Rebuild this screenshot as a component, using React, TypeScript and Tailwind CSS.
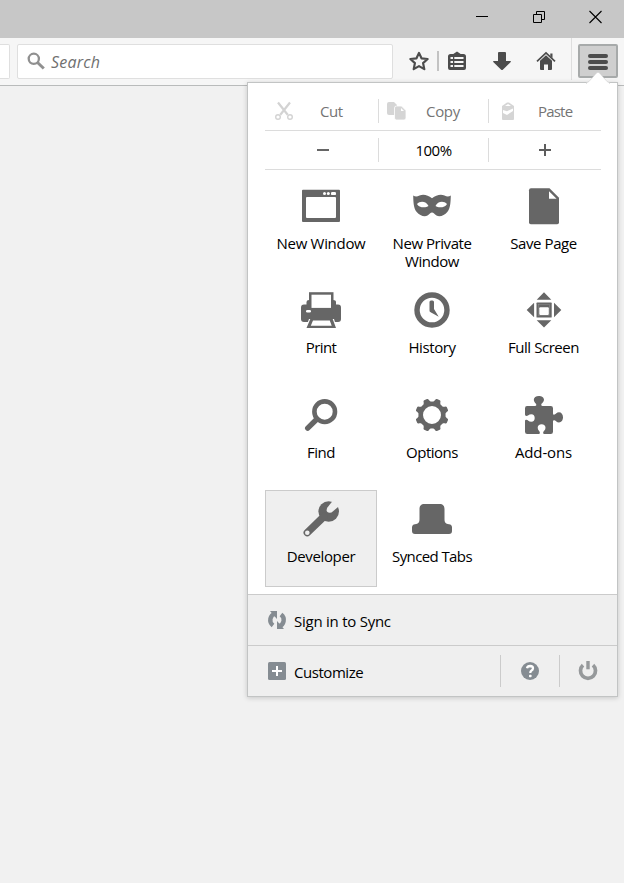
import type { ReactNode } from "react";

const label = "font-['Open_Sans','Noto_Sans',sans-serif]";

function Icon({ children }: { children: ReactNode }) {
  return (
    <svg width="40" height="40" viewBox="0 0 40 40" fill="#666" className="block shrink-0">
      {children}
    </svg>
  );
}

function SmallIcon({ children, className = "" }: { children: ReactNode; className?: string }) {
  return (
    <svg width="20" height="20" viewBox="0 0 20 20" className={`block shrink-0 ${className}`}>
      {children}
    </svg>
  );
}

const windowIcon = (
  <Icon>
    <path fillRule="evenodd" d="M2 3.7H38Q39 3.7 39 4.700V35Q39 36 38 36H2Q1 36 1 35V4.700Q1 3.700 2 3.700ZM6 11Q5 11 5 12V31Q5 32 6 32H34Q35 32 35 31V12Q35 11 34 11Z" />
    <circle cx="23.5" cy="7.600" r="1.500" fill="#fff" />
    <circle cx="27.300" cy="7.600" r="1.500" fill="#fff" />
    <rect x="30" y="6.100" width="5" height="3" rx="1.200" fill="#fff" />
  </Icon>
);

const maskIcon = (
  <Icon>
    <path
      fillRule="evenodd"
      d="M1.200 9.500C3.500 11 5.500 10.500 7.500 9.500C12 7.700 16 9.500 20 12.200C24 9.500 28 7.700 32.500 9.500C34.500 10.500 36.500 11 38.800 9.500C38.600 16 38.500 22 35.300 26C32.500 29.500 27.500 31.500 24.500 29.500C22.500 28 21.500 26.500 20 26.500C18.500 26.500 17.500 28 15.500 29.500C12.500 31.500 7.500 29.500 4.700 26C1.500 22 1.400 16 1.200 9.500ZM5 18C6.500 21.600 13.500 22.400 16.500 20C14.500 15.500 8.500 14.300 5 18ZM35 18C33.500 21.600 26.500 22.400 23.500 20C25.500 15.500 31.500 14.300 35 18Z"
    />
  </Icon>
);

const pageIcon = (
  <Icon>
    <path d="M7 2.300H25.500L35 11.700V36.500Q35 38.300 33.200 38.300H6.800Q5 38.300 5 36.500V4.300Q5 2.300 7 2.300Z" />
    <path d="M25 5.200V12.700H32.600Z" fill="#fff" />
  </Icon>
);

const printIcon = (
  <Icon>
    <path d="M3 14.500H37Q40 14.500 40 17.500V29Q40 32 37 32H3Q0 32 0 29V17.500Q0 14.500 3 14.500Z" />
    <path d="M5.500 17V12Q5.500 10 8 10H32Q35 10 35 12V17Z" />
    <path d="M8 2.200H32.500V18H8Z" />
    <rect x="10.500" y="4.700" width="19.500" height="13.200" fill="#fff" />
    <rect x="5" y="20" width="5" height="2.600" rx="1.300" fill="#fff" />
    <path d="M8 29H33L36 38.500H4.500Z" fill="#fff" />
    <path fillRule="evenodd" d="M9.500 28.500H31.500L35 38H5.500ZM12 30.500L9.800 35.700H30.700L28.800 30.500Z" />
  </Icon>
);

const clockIcon = (
  <Icon>
    <circle cx="20" cy="20" r="15" fill="none" stroke="#666" strokeWidth="5.400" />
    <path d="M17.500 12Q17.500 10.500 19 10.500H20.500Q22 10.500 22 12V19L26.700 26.700L18.200 22Q17.500 21.500 17.500 20.500Z" />
  </Icon>
);

const fullScreenIcon = (
  <Icon>
    <path d="M20 2.300L27.300 9.700H12.700ZM20 37.600L12.700 30.200H27.300ZM2.700 20L10.100 12.800V27.200ZM37.300 20L30 12.800V27.200Z" />
    <rect x="12.500" y="12.600" width="15.200" height="15" rx=".6" />
    <rect x="14.500" y="14.600" width="11.200" height="11" fill="none" stroke="#999" strokeWidth=".4" />
    <rect x="15.300" y="17.300" width="9.500" height="7.700" rx="1" fill="#fff" />
  </Icon>
);

const findIcon = (
  <Icon>
    <circle cx="23.700" cy="16.700" r="10.300" fill="none" stroke="#666" strokeWidth="4.600" />
    <path d="M15.500 24.500L6.700 33.100" stroke="#666" strokeWidth="5.400" strokeLinecap="round" />
  </Icon>
);

const toothAngles = [22.5, 67.5, 112.5, 157.5, 202.5, 247.5, 292.5, 337.5];
const gearIcon = (
  <Icon>
    {toothAngles.map((a) => (
      <path key={a} transform={`rotate(${a} 20 20)`} d="M15.500 9L17.200 5Q17.200 3.300 18.500 3.300H21.500Q22.800 3.300 22.800 5L24.500 9Z" />
    ))}
    <circle cx="20" cy="20" r="11.300" fill="none" stroke="#666" strokeWidth="4.600" />
  </Icon>
);

const puzzleIcon = (
  <Icon>
    <path d="M3 11H11.200Q12.700 11 12.200 9C11.300 7.700 9.800 6.800 9.800 4.700C9.800 2.500 12 1 14.800 1C17.600 1 20 2.500 20 4.700C20 6.800 18.200 7.700 17.300 9Q16.900 11 18.400 11H26.800Q29 11 29 13.300V18.400Q29 19.900 30.500 19.600C32 19.200 32.500 17.300 35 17.300C37.300 17.300 39 19.400 39 22.300C39 25.200 37.300 27.400 35 27.400C32.500 27.400 32 25.500 30.500 25.200Q29 24.900 29 26.300V36.700Q29 39 26.800 39H20.500Q19 39 19.100 37.700C19.300 35.900 21.500 35.500 21.500 32.800C21.500 30.700 20 29.300 17.600 29.300C15.200 29.300 13.700 30.700 13.700 32.800C13.700 35.500 15.800 35.900 15.900 37.700Q16 39 14.600 39H3.200Q1 39 1 36.700V26Q1 24.600 2.300 24.700C4 24.800 4.500 26.700 7.300 26.700C9.600 26.700 10.700 25 10.700 22.900C10.700 20.800 9.600 19.200 7.300 19.200C4.500 19.200 4 21.100 2.300 21.100Q1 21 1 19.600V13.200Q1 11 3 11Z" />
  </Icon>
);

const wrenchIcon = (
  <Icon>
    <circle cx="27.700" cy="12.500" r="10.300" />
    <path d="M23 17.500L6.300 33.700" stroke="#666" strokeWidth="7.400" strokeLinecap="round" />
    <path d="M34 -1L26.200 8.700Q24 14.500 30.500 13.500L40 5.500Z" fill="#efefef" />
    <circle cx="6.300" cy="33.700" r="2.300" fill="#efefef" />
  </Icon>
);

const hatIcon = (
  <Icon>
    <path d="M12.500 5H27.500C31 5 32.500 7 32.500 10V20C32.500 23.500 33.500 24.700 37 25.300C39 25.600 40 26.600 40 28.500V32Q40 35 37 35H3Q0 35 0 32V28.500C0 26.600 1 25.600 3 25.300C6.500 24.700 7.500 23.500 7.500 20V10C7.500 7 9 5 12.500 5Z" />
  </Icon>
);

const items: { lines: string[]; icon: ReactNode; track: string; active?: boolean }[] = [
  { lines: ["New Window"], icon: windowIcon, track: "tracking-[-0.3px]" },
  { lines: ["New Private", "Window"], icon: maskIcon, track: "tracking-[-0.45px]" },
  { lines: ["Save Page"], icon: pageIcon, track: "tracking-[-0.4px]" },
  { lines: ["Print"], icon: printIcon, track: "tracking-[-0.6px]" },
  { lines: ["History"], icon: clockIcon, track: "tracking-[-0.4px]" },
  { lines: ["Full Screen"], icon: fullScreenIcon, track: "tracking-[-0.45px]" },
  { lines: ["Find"], icon: findIcon, track: "tracking-[-0.5px]" },
  { lines: ["Options"], icon: gearIcon, track: "tracking-[-0.5px]" },
  { lines: ["Add-ons"], icon: puzzleIcon, track: "tracking-[-0.15px]" },
  { lines: ["Developer"], icon: wrenchIcon, track: "tracking-[-0.35px]", active: true },
  { lines: ["Synced Tabs"], icon: hatIcon, track: "tracking-[-0.6px]" },
];

function TitleBar() {
  return (
    <div className="flex h-[38px] items-start justify-end bg-[#c7c7c7] pr-[18px] pt-[7px]">
      <svg width="132" height="20" viewBox="0 0 132 20" fill="none" stroke="#000" className="block">
        <path d="M2 9.500H14" />
        <path d="M59.500 7.500H67.500V15.500H59.500ZM62.500 7.500V4.500H70.500V12.500H67.500" />
        <path d="M115.500 4L127.500 16M127.500 4L115.500 16" strokeWidth="1.100" />
      </svg>
    </div>
  );
}

function ToolBar() {
  return (
    <div className="flex h-12 border-b border-[#b9bbbb] bg-[#f6f6f6]">
      <div className="mt-1.5 h-[35px] w-2.5 rounded-r-[2px] border border-l-0 border-[#dfdfdf] bg-white" />
      <div className="ml-[7px] mt-1.5 flex h-[35px] w-[376px] items-center rounded-[2px] border border-[#dfdfdf] bg-white pl-[9px]">
        <SmallIcon>
          <circle cx="6.800" cy="6.800" r="5.100" fill="none" stroke="#909090" strokeWidth="2.300" />
          <path d="M10.500 10.500L16.800 16.500" stroke="#909090" strokeWidth="3" />
        </SmallIcon>
        <span className={`${label} ml-[4px] text-[16px] italic leading-5 tracking-[0.2px] text-[#707070]`}>Search</span>
      </div>
      <div className="flex w-[178px] items-start pl-[16px] pt-[13px]">
        <SmallIcon>
          <path d="M10 1.900L12.500 7.300L18.600 8L14.100 12.100L15.300 18.100L10 15.100L4.700 18.100L5.900 12.100L1.400 8L7.500 7.300Z" fill="none" stroke="#4c4c4c" strokeWidth="2.200" strokeLinejoin="round" />
        </SmallIcon>
        <div className="ml-2 h-5 w-[2px] bg-[#c3c3c3]" />
        <SmallIcon className="ml-[8px]">
          <path d="M3.500 3H6.300L10 .4L13.700 3H16.500Q19 3 19 5.500V17Q19 19 17 19H3Q1 19 1 17V5.500Q1 3 3.500 3Z" fill="#4c4c4c" />
          <path d="M3.500 6H6V8H3.500ZM7.300 6H16.500V8H7.300ZM3.500 10H6V12H3.500ZM7.300 10H16.500V12H7.300ZM3.500 14H6V16H3.500ZM7.300 14H16.500V16H7.300Z" fill="#f6f6f6" />
        </SmallIcon>
        <SmallIcon className="ml-[25px]">
          <path d="M7 1H13Q14 1 14 2V10H18.300Q19.500 10.300 18.500 11.300L10.800 18.700Q10 19.300 9.200 18.700L1.500 11.300Q.5 10.300 1.700 10H6V2Q6 1 7 1Z" fill="#4c4c4c" />
        </SmallIcon>
        <SmallIcon className="ml-[24px]">
          <path d="M1 10.300L10 2L19 10.300" fill="none" stroke="#4c4c4c" strokeWidth="1.700" />
          <path d="M14.300 2.500H16.500V7L14.300 5ZM10 4.200L16 9.700V18Q16 19 15 19H12V13.500H8V19H5Q4 19 4 18V9.700Z" fill="#4c4c4c" />
        </SmallIcon>
      </div>
      <div className="h-[42px] w-px bg-[#dedede]" />
      <div className="ml-1.5 mt-1.5 flex h-[34px] w-10 flex-col items-center gap-[2px] rounded-[2px] border-2 border-[#a7aaaa] bg-[#cfcfcf] pt-[8px]">
        <div className="h-[4px] w-5 rounded-full bg-[#4c4c4c]" />
        <div className="h-[4px] w-5 rounded-full bg-[#4c4c4c]" />
        <div className="h-[4px] w-5 rounded-full bg-[#4c4c4c]" />
      </div>
    </div>
  );
}

function EditRow() {
  return (
    <div className="flex h-[40px] items-start border-b border-[#dcdcdc] pt-[8px] text-[15px] leading-6 text-[#747474]">
      <div className="flex h-6 w-[114px] items-center border-r border-[#dcdcdc] pl-[9px]">
        <SmallIcon>
          <path d="M4 1.500L13.700 13.800M16 1.500L6.300 13.800" stroke="#d3d3d3" strokeWidth="2.200" />
          <circle cx="4" cy="16" r="2.300" fill="none" stroke="#d3d3d3" strokeWidth="1.400" />
          <circle cx="16" cy="16" r="2.300" fill="none" stroke="#d3d3d3" strokeWidth="1.400" />
        </SmallIcon>
        <span className="ml-[26px] tracking-[-0.4px]">Cut</span>
      </div>
      <div className="flex h-6 w-[110px] items-center border-r border-[#dcdcdc] pl-[8px]">
        <SmallIcon>
          <path d="M2 1H7L10 4V14H2Q0 14 0 12V3Q0 1 2 1Z" fill="#d5d5d5" />
          <path d="M9.500 5H14.500L19 9.500V17Q19 19 17 19H9.500Q7.500 19 7.500 17V7Q7.500 5 9.500 5Z" fill="#d5d5d5" stroke="#fff" strokeWidth=".8" />
          <path d="M14 7V10H17Z" fill="#fff" />
        </SmallIcon>
        <span className="ml-[19px] tracking-[-0.3px]">Copy</span>
      </div>
      <div className="flex h-6 items-center pl-[10px]">
        <SmallIcon>
          <path d="M3 5L8 1.500H10L15 5V18Q15 19 14 19H4Q3 19 3 18Z" fill="#d5d5d5" />
          <path d="M6 5L9 3L12 5ZM4 9L8 10.200L14 7.500V10L8 14L4 12Z" fill="#fff" />
        </SmallIcon>
        <span className="ml-[19px] tracking-[-0.8px]">Paste</span>
      </div>
    </div>
  );
}

function ZoomRow() {
  return (
    <div className="flex h-[39px] items-start border-b border-[#dcdcdc] pt-[7px] text-[15px] leading-6 text-black">
      <div className="flex h-6 w-[114px] items-center justify-center border-r border-[#dcdcdc] pl-[2px]">
        <div className="h-[2px] w-3 bg-[#666]" />
      </div>
      <div className="flex h-6 w-[110px] items-center justify-center border-r border-[#dcdcdc]">
        <span className="tracking-[-0.5px]">100%</span>
      </div>
      <div className="flex h-6 w-[112px] items-center justify-center">
        <svg width="14" height="14" viewBox="0 0 14 14" className="block">
          <path d="M1 7H13M7 1V13" stroke="#5d5d5d" strokeWidth="2" />
        </svg>
      </div>
    </div>
  );
}

function Footer() {
  return (
    <div className="h-[102px] border-t border-[#cbcbcb] bg-[#efefef] text-[15px] leading-5 text-black">
      <div className="flex h-[50px] items-center pl-[19px] pt-px">
        <SmallIcon className="mb-[2px]">
          <path d="M8.300 3.500A6.800 6.800 0 0 0 6 15.500" fill="none" stroke="#858c92" strokeWidth="4.400" />
          <path d="M11.700 16.500A6.800 6.800 0 0 0 14 4.500" fill="none" stroke="#858c92" strokeWidth="4.400" />
          <path d="M3 1H10V9L7.700 6.500Z" fill="#858c92" />
          <path d="M17 19H10V11L12.300 13.500Z" fill="#858c92" />
        </SmallIcon>
        <span className="ml-[7px] tracking-[-0.25px]">Sign in to Sync</span>
      </div>
      <div className="flex h-[51px] items-center border-t border-[#cbcbcb] pl-[19px]">
        <SmallIcon>
          <rect x="1" y="1" width="18" height="18" rx="1.500" fill="#858c92" />
          <path d="M5 10H15M10 5V15" stroke="#fff" strokeWidth="2" />
        </SmallIcon>
        <span className="ml-[7px] w-[206px] pt-px tracking-[-0.45px]">Customize</span>
        <div className="flex h-8 w-[59px] items-center justify-center border-l border-[#cbcbcb]">
          <svg width="20" height="20" viewBox="0 0 20 20" className="block">
            <circle cx="10" cy="10" r="9" fill="#858c92" />
            <path d="M7 7.200Q7.500 5 10.200 5Q13 5.100 13 7.300Q13 8.800 11.300 9.700Q10.300 10.300 10.300 12" fill="none" stroke="#fff" strokeWidth="2.300" />
            <rect x="9" y="13.700" width="2.600" height="2.500" rx=".8" fill="#fff" />
          </svg>
        </div>
        <div className="flex h-8 w-[58px] items-center border-l border-[#cbcbcb] pl-[18px]">
          <svg width="20" height="20" viewBox="0 0 20 20" className="block">
            <path d="M5 4.200A7.500 7.500 0 1 0 15 4.200" fill="none" stroke="#96999b" strokeWidth="3.700" />
            <rect x="8.300" y="0" width="3.400" height="8.300" fill="#96999b" />
          </svg>
        </div>
      </div>
    </div>
  );
}

export default function App() {
  return (
    <div className={`${label} relative h-[883px] w-[624px] overflow-hidden bg-[#f1f1f1]`}>
      <TitleBar />
      <ToolBar />
      <div className="absolute left-[247px] top-[82px] h-[615px] w-[371px] border border-[#c2c4c4] bg-white shadow-[0_1px_5px_rgba(0,0,0,0.18)]">
        <div className="pl-[17px] pr-[16px] pt-2">
          <EditRow />
          <ZoomRow />
        </div>
        <div className="grid h-[424px] grid-cols-[112px_110px_113px] grid-rows-[104px_105px_104px_97px] px-[17px] pt-[7px]">
          {items.map((item) => (
            <div
              key={item.lines[0]}
              className={`flex h-[97px] flex-col items-center border pt-2 ${item.active ? "border-[#cbcbcb] bg-[#efefef]" : "border-transparent"}`}
            >
              {item.icon}
              <div className="mt-[8px] flex flex-col items-center">
                {item.lines.map((line) => (
                  <span key={line} className={`block whitespace-nowrap text-[15px] leading-[18px] text-black ${item.track}`}>
                    {line}
                  </span>
                ))}
              </div>
            </div>
          ))}
        </div>
        <Footer />
      </div>
      <svg width="24" height="13" viewBox="0 0 24 13" className="absolute left-[586px] top-[71px] block">
        <path d="M0 12L3 10.500L10.500 2Q12 .5 13.500 2L21 10.500L24 12V13H0Z" fill="#fff" stroke="#c9c9c9" strokeWidth=".5" />
        <path d="M1 12H23V13H1Z" fill="#fff" />
      </svg>
    </div>
  );
}
